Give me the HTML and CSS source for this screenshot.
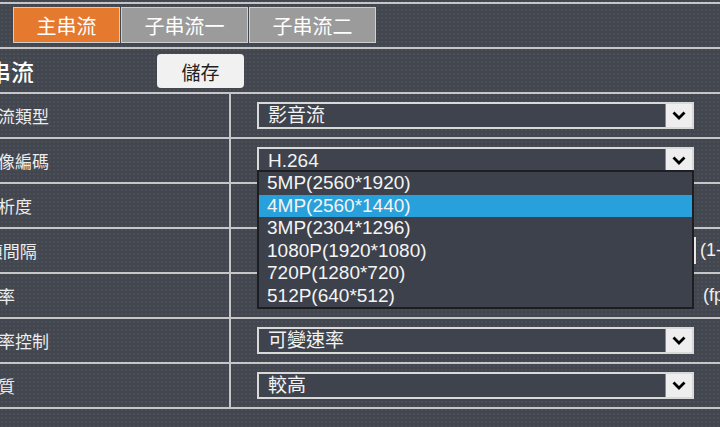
FILE: index.html
```html
<!DOCTYPE html>
<html lang="zh-Hant">
<head>
    <meta charset="UTF-8">
    <title>串流設定</title>
    <link rel="stylesheet" href="styles.css">
</head>
<body>
    <div class="page">
        <div class="topbar">
            <div class="tabs">
                <div class="tab tab-main active">主串流</div>
                <div class="tab tab-sub">子串流一</div>
                <div class="tab tab-sub">子串流二</div>
            </div>
        </div>

        <div class="title-row">
            <h2 class="title">主串流</h2>
            <button class="btn-save">儲存</button>
        </div>

        <div class="settings">
            <div class="row">
                <div class="label">碼流類型</div>
                <div class="value">
                    <div class="select"><span class="select-text">影音流</span><span class="arrow"><svg width="14" height="9" viewBox="0 0 14 9"><polyline points="1.5,1.5 7,7 12.5,1.5" fill="none" stroke="#000" stroke-width="2.8"/></svg></span></div>
                </div>
            </div>
            <div class="row">
                <div class="label">影像編碼</div>
                <div class="value">
                    <div class="select open"><span class="select-text">H.264</span><span class="arrow"><svg width="14" height="9" viewBox="0 0 14 9"><polyline points="1.5,1.5 7,7 12.5,1.5" fill="none" stroke="#000" stroke-width="2.8"/></svg></span>
                        <ul class="dropdown">
                            <li>5MP(2560*1920)</li>
                            <li class="selected">4MP(2560*1440)</li>
                            <li>3MP(2304*1296)</li>
                            <li>1080P(1920*1080)</li>
                            <li>720P(1280*720)</li>
                            <li>512P(640*512)</li>
                        </ul>
                    </div>
                </div>
            </div>
            <div class="row">
                <div class="label">解析度</div>
                <div class="value">
                    <div class="select"><span class="select-text"></span><span class="arrow"></span></div>
                </div>
            </div>
            <div class="row">
                <div class="label">I幀間隔</div>
                <div class="value">
                    <div class="input input-wide"></div>
                    <span class="hint">(1-150)</span>
                </div>
            </div>
            <div class="row">
                <div class="label">幀率</div>
                <div class="value">
                    <div class="input input-narrow"></div>
                    <span class="hint hint-fps">(fps)</span>
                </div>
            </div>
            <div class="row">
                <div class="label">碼率控制</div>
                <div class="value">
                    <div class="select"><span class="select-text">可變速率</span><span class="arrow"><svg width="14" height="9" viewBox="0 0 14 9"><polyline points="1.5,1.5 7,7 12.5,1.5" fill="none" stroke="#000" stroke-width="2.8"/></svg></span></div>
                </div>
            </div>
            <div class="row">
                <div class="label">畫質</div>
                <div class="value">
                    <div class="select"><span class="select-text">較高</span><span class="arrow"><svg width="14" height="9" viewBox="0 0 14 9"><polyline points="1.5,1.5 7,7 12.5,1.5" fill="none" stroke="#000" stroke-width="2.8"/></svg></span></div>
                </div>
            </div>
        </div>
    </div>
</body>
</html>
```

FILE: styles.css
```css
* {
    margin: 0;
    padding: 0;
    box-sizing: border-box;
    font-family: 'Liberation Sans', 'Noto Sans CJK TC', sans-serif;
}

body {
    background-color: #42464f;
    background-image: radial-gradient(rgba(255,255,255,0.05) 0.8px, transparent 1.2px);
    background-size: 4px 4px;
    color: #f0f0f0;
    overflow: hidden;
    height: 427px;
}

/* page is scrolled a little to the right */
.page {
    margin-left: -40px;
    width: 800px;
    padding-top: 2px;
}

.topbar {
    border-top: 2px solid #c6c6c8;
    border-bottom: 2px solid #c6c6c8;
    padding: 3px 0 4px 53px;
}

.tabs {
    display: flex;
    height: 36px;
}

.tab {
    display: flex;
    align-items: center;
    justify-content: center;
    border: 1px solid #cfcfcf;
    margin-right: 1px;
    color: #fff;
    font-size: 20px;
}

.tab-main {
    width: 107px;
    background: #e57a2f;
}

.tab-sub {
    width: 127px;
    background: #9b9b9b;
}

.title-row {
    display: flex;
    align-items: center;
    height: 45px;
    padding-left: 5px;
    border-bottom: 2px solid #c6c6c8;
}

.title {
    width: 192px;
    font-size: 23px;
    font-weight: 500;
    color: #fff;
}

.btn-save {
    width: 87px;
    height: 34px;
    margin-top: 1px;
    background: #f1f1f1;
    border: none;
    border-radius: 4px;
    color: #222;
    font-size: 19px;
}

.row {
    display: flex;
    height: 45px;
    border-bottom: 2px solid #c6c6c8;
}

.label {
    width: 271px;
    padding-left: 21px;
    border-right: 2px solid #c6c6c8;
    display: flex;
    align-items: center;
    font-size: 17px;
    color: #ececec;
    white-space: nowrap;
}

.value {
    display: flex;
    align-items: center;
    padding-left: 26px;
}

.select {
    position: relative;
    display: flex;
    align-items: center;
    width: 437px;
    height: 27px;
    border: 2px solid #d9d9d9;
    background: #3f434d;
}

.select-text {
    flex: 1;
    padding-left: 9px;
    font-size: 19px;
    color: #f2f2f2;
    line-height: 23px;
}

.arrow {
    width: 27px;
    height: 100%;
    display: flex;
    align-items: center;
    justify-content: center;
    background: #eeeeee;
    border-left: 1px solid #8a8a8a;
}

.dropdown {
    position: absolute;
    left: -2px;
    top: 21px;
    width: 437px;
    list-style: none;
    background: #3d414b;
    border: 2px solid #1d1e21;
    z-index: 5;
}

.dropdown li {
    height: 22.5px;
    line-height: 22.5px;
    padding-left: 8px;
    font-size: 19px;
    color: #f4f4f4;
}

.dropdown li.selected {
    background: #27a0dc;
}

.input {
    height: 27px;
    border: 2px solid #e6e6e6;
    background: #3f434d;
}

.input-wide {
    width: 439px;
}

.input-narrow {
    width: 434px;
}

.hint {
    margin-left: 4px;
    font-size: 18px;
    color: #eeeeee;
    white-space: nowrap;
}

.hint-fps {
    margin-left: 12px;
}
```
